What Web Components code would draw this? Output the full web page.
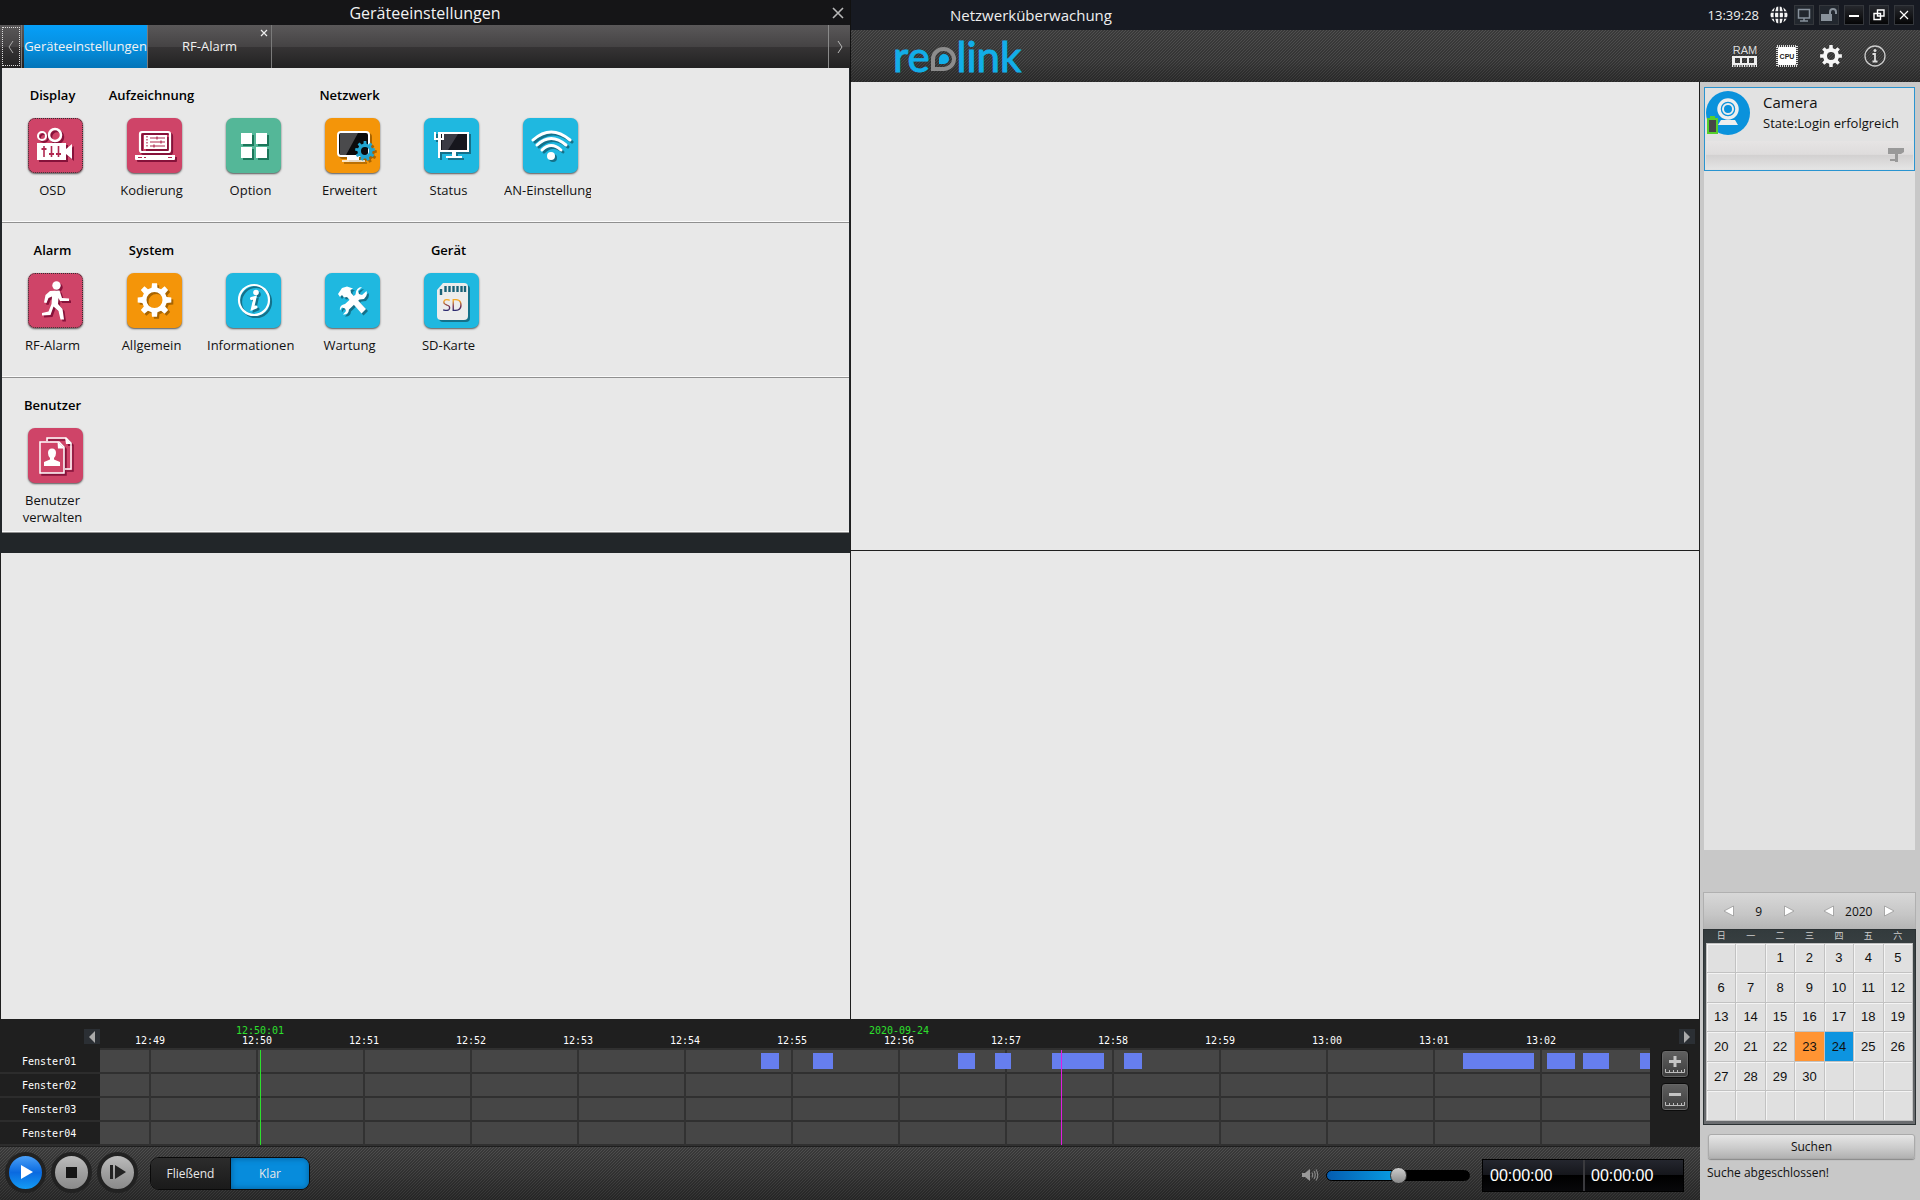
<!DOCTYPE html>
<html lang="de">
<head>
<meta charset="utf-8">
<title>Netzwerküberwachung</title>
<style>
  html, body {
    height: 100%;
    margin: 0;
  }
  body {
    background: #1f1f1f;
    font-family: "Open Sans", "Noto Sans", sans-serif;
    font-size: 13px;
  }
</style>
</head>
<body>
<client-app></client-app>

<script>
const HATCH = 'linear-gradient(135deg, rgba(0,0,0,.28) 25%, rgba(0,0,0,0) 25% 50%, rgba(0,0,0,.28) 50% 75%, rgba(0,0,0,0) 75%) 0 0 / 3px 3px';

const RESET = `
  *, *::before, *::after { box-sizing: border-box; }
  button {
    margin: 0;
    padding: 0;
    border: 0;
    background: none;
    color: inherit;
    font: inherit;
    cursor: pointer;
  }
  svg { display: block; overflow: visible; }
`;

// outline of a cog with the given number of teeth
function cogPath(cx, cy, outer, inner, teeth) {
  const points = [];
  const step = (Math.PI * 2) / teeth;
  for (let i = 0; i < teeth; i++) {
    const a = i * step - Math.PI / 2;
    [[-0.3, inner], [-0.19, outer], [0.19, outer], [0.3, inner]].forEach(([o, r]) => {
      points.push(`${(cx + r * Math.cos(a + o * step)).toFixed(2)} ${(cy + r * Math.sin(a + o * step)).toFixed(2)}`);
    });
  }
  return `M${points.join('L')}Z`;
}

const ICONS = {
  osd: `
    <circle cx="14" cy="18" r="4" fill="none" stroke="#fff" stroke-width="2"/>
    <circle cx="27" cy="17" r="6" fill="none" stroke="#fff" stroke-width="2.5"/>
    <path fill="#fff" fill-rule="evenodd" d="M9 25H38V31L44 26V41L38 36V42H9Z"/>
    <path stroke="#b02850" stroke-width="1.6" d="M16 28V39M23.500 28V39M30.500 28V39"/>
    <path stroke="#b02850" stroke-width="2" d="M13.500 31H18.500M21 36H26M28 36H33"/>`,
  encode: `
    <rect x="13" y="14" width="30" height="20" rx="2" fill="none" stroke="#fff" stroke-width="2.2"/>
    <rect x="17" y="17" width="23" height="14" fill="#fff"/>
    <path stroke="#b02850" stroke-width="1.2" d="M23 20H38M23 24H38M23 28H38M30 18.500V21.500M34 22.500V25.500M27 26.500V29.500"/>
    <path stroke="#b02850" stroke-width="1.2" stroke-dasharray="1.5 1.5" d="M20 18V30"/>
    <path fill="#fff" d="M8 37H48V41Q48 42 47 42H9Q8 42 8 41Z"/>
    <path stroke="#b02850" stroke-width="1.2" d="M11 39.500H15M17 39.500H19M41 39.500H45"/>`,
  option: `<path fill="#fff" d="M15 15H26V26H15ZM30 15H41V26H30ZM15 29H26V40H15ZM30 29H41V40H30Z"/>`,
  advanced: `
    <path fill="#fff" d="M22 38H34V42H22Z"/>
    <rect x="13" y="14" width="31" height="24" rx="3" fill="#0b0b0c" stroke="#fff" stroke-width="2"/>
    <path fill="#4a4a4c" d="M15 15H33L21 37H15Z"/>
    <path stroke="#fff" stroke-width="1.5" d="M17 43H40"/>
    <path fill="#22a5d0" fill-rule="evenodd" d="${cogPath(40, 33, 10, 7.5, 9)}M44 33A4 4 0 1 0 36 33A4 4 0 1 0 44 33Z"/>`,
  status: `
    <rect x="16" y="15" width="28" height="18" fill="#16161d" stroke="#fff" stroke-width="2"/>
    <path fill="#3b3b44" d="M18 16H34L24 32H18Z"/>
    <path fill="#fff" d="M28 34H32V38H38V40H22V38H28Z"/>
    <path fill="none" stroke="#fff" stroke-width="2" d="M11 14V21H19V14M15 14V40"/>`,
  wifi: `
    <g fill="none" stroke="#fff" stroke-width="3" stroke-linecap="round">
      <path d="M10 22Q28 6 47 22"/><path d="M14 27Q28 14 43 27"/><path d="M19 32Q28 23 38 32"/>
    </g>
    <circle cx="28" cy="38" r="4" fill="#fff"/>`,
  runner: `
    <circle cx="28.500" cy="12.500" r="4.200" fill="#fff"/>
    <path fill="#fff" d="M22 18L31.500 17.500L34 25L41 25.500V28L32 28L30.500 25L30 31L34.500 36L36 46.500H32.500L30.500 38L25.500 33.500L22.500 42L14 42.500V40L20.500 38.500L23.500 31L24 23.500L20.500 25L18.500 30L16 29.500L17.500 22Z"/>`,
  gear: `<path fill="#fff" fill-rule="evenodd" d="${cogPath(27.5, 27, 17, 12.5, 8)}M35.500 27A8 8 0 1 0 19.500 27A8 8 0 1 0 35.500 27Z"/>`,
  info: `
    <circle cx="28" cy="27" r="15" fill="none" stroke="#fff" stroke-width="2.2"/>
    <circle cx="30" cy="19.500" r="2.800" fill="#fff"/>
    <path fill="none" stroke="#fff" stroke-width="3" stroke-linecap="round" d="M25.500 25.500L29 24.500L26.500 35.500L30 34"/>`,
  service: `
    <path fill="#fff" d="M13 21L17 15L22 13.500L28 15.500L25.500 17L26 20L41 36L36.500 40.500L22 24L19 24.500L17 22L15 24Z"/>
    <path fill="#fff" d="M37 14L33 18L34 21L37 22L41.500 18Q43 23 39 26L34.500 26.500L24 36.500Q23.500 42 18 41.500L21 38L20 35.500L17 34.500L15 37.500Q14 32 20 31L30.500 21.500Q31 14 37 14Z"/>`,
  sd: `
    <path fill="#ececec" d="M19 10H40Q44 10 44 14V43Q44 47 40 47H17Q13 47 13 43V17Z"/>
    <path stroke="#1b6278" stroke-width="2.4" d="M17 16V22M21.500 13V19M25.500 13V19M29.500 13V19M33.500 13V19M37.500 13V19M41 13V19"/>
    <text x="28.500" y="38" text-anchor="middle" font-family="Open Sans, sans-serif" font-size="16" fill="url(#sdInk)">SD</text>
    <defs><linearGradient id="sdInk" x1="0" y1="0" x2="0" y2="1">
      <stop offset=".3" stop-color="#f5a623"/><stop offset=".55" stop-color="#7a3050"/><stop offset=".8" stop-color="#1a2a78"/>
    </linearGradient></defs>`,
  users: `
    <path fill="none" stroke="#fff" stroke-width="1.500" d="M19 13V10H38L43 15V41H37"/>
    <path fill="#fff" d="M37 9.500L43.500 16H38Z"/>
    <path fill="#cf4468" stroke="#fff" stroke-width="1.500" d="M12 14H31L36 19V45H12Z"/>
    <path fill="#fff" d="M29.500 13.500L36.500 20.500H30Z"/>
    <path fill="#fff" d="M24 20.500Q28 20.500 28 25Q28 28 26 30V31.500L32 34V38H16V34L22 31.500V30Q20 28 20 25Q20 20.500 24 20.500Z"/>`
};

class ClientApp extends HTMLElement {
  constructor() {
    super();
    this.attachShadow({ mode: 'open' }).innerHTML = this.template;
  }

  get template() {
    return `
      <style>
        ${RESET}
        :host {
          display: grid;
          grid-template-columns: minmax(0, 1fr) minmax(0, 1fr) 220px;
          grid-template-rows: auto minmax(0, 1fr) auto auto;
          min-height: 100vh;
        }
        .left {
          grid-column: 1;
          grid-row: 1 / 3;
          display: flex;
          flex-direction: column;
        }
        .left video-view { flex: 1; }
        app-header { grid-column: 2 / 4; grid-row: 1; }
        .right {
          grid-column: 2;
          grid-row: 2;
          display: grid;
          grid-template-rows: 1fr 1fr;
          border-right: 1px solid #1f1f1f;
        }
        side-panel { grid-column: 3; grid-row: 2 / 5; }
        time-line { grid-column: 1 / 3; grid-row: 3; }
        player-bar { grid-column: 1 / 3; grid-row: 4; }
      </style>
      <div class="left">
        <settings-window>
          <settings-row>
            <settings-item heading="Display" icon="osd" tone="pink" focused>OSD</settings-item>
            <settings-item heading="Aufzeichnung" icon="encode" tone="pink">Kodierung</settings-item>
            <settings-item icon="option" tone="green">Option</settings-item>
            <settings-item heading="Netzwerk" icon="advanced" tone="orange">Erweitert</settings-item>
            <settings-item icon="status" tone="cyan">Status</settings-item>
            <settings-item icon="wifi" tone="cyan">AN-Einstellung</settings-item>
          </settings-row>
          <settings-row>
            <settings-item heading="Alarm" icon="runner" tone="pink" focused>RF-Alarm</settings-item>
            <settings-item heading="System" icon="gear" tone="orange">Allgemein</settings-item>
            <settings-item icon="info" tone="cyan">Informationen</settings-item>
            <settings-item icon="service" tone="cyan">Wartung</settings-item>
            <settings-item heading="Gerät" icon="sd" tone="cyan">SD-Karte</settings-item>
          </settings-row>
          <settings-row>
            <settings-item heading="Benutzer" icon="users" tone="pink">Benutzer<br>verwalten</settings-item>
          </settings-row>
        </settings-window>
        <video-view></video-view>
      </div>
      <app-header></app-header>
      <div class="right">
        <video-view></video-view>
        <video-view></video-view>
      </div>
      <side-panel>
        <camera-card name="Camera">State:Login erfolgreich</camera-card>
      </side-panel>
      <time-line></time-line>
      <player-bar></player-bar>
    `;
  }
}

class VideoView extends HTMLElement {
  constructor() {
    super();
    this.attachShadow({ mode: 'open' }).innerHTML = `
      <style>
        :host {
          display: block;
          box-sizing: border-box;
          border-left: 1px solid #1f1f1f;
          border-bottom: 1px solid #1f1f1f;
          background: #e8e8e8;
        }
      </style>
    `;
  }
}

class SettingsWindow extends HTMLElement {
  constructor() {
    super();
    this.attachShadow({ mode: 'open' }).innerHTML = this.template;
  }

  get template() {
    return `
      <style>
        ${RESET}
        :host {
          display: block;
          background: #222629;
          padding-bottom: 20px;
        }
        header {
          display: grid;
          grid-template-columns: 24px 1fr 24px;
          align-items: center;
          height: 25px;
          background: #151517;
          color: #f2f2f2;
        }
        header button { justify-self: center; }
        h1 {
          grid-column: 2;
          margin: 0;
          font-size: 16px;
          font-weight: 400;
          line-height: 24px;
          text-align: center;
        }
        nav {
          display: flex;
          height: 43px;
          color: #f2f2f2;
          background: linear-gradient(#5a5859, #454344 50%, #363435 51%, #222);
        }
        .arrow {
          display: grid;
          place-items: center;
          width: 22px;
          border-right: 1px solid #7a7a7a;
        }
        .arrow.prev { outline: 1px dotted #ddd; outline-offset: -3px; }
        .arrow.next {
          margin-left: auto;
          border-right: 0;
          border-left: 1px solid #8a8a8a;
        }
        .tab {
          position: relative;
          width: 124px;
          border-right: 1px solid #7a7a7a;
          line-height: 43px;
          white-space: nowrap;
        }
        .tab button { width: 100%; height: 100%; }
        .tab.active {
          margin-left: 2px;
          background: linear-gradient(#069ff8, #0790e0 50%, #0274b8);
        }
        .tab .close {
          position: absolute;
          top: 4px;
          right: 3px;
          width: 8px;
          height: 8px;
        }
        main {
          margin: 0 1px 0 2px;
          background: #e8e8e8;
        }
      </style>
      <header>
        <h1>Geräteeinstellungen</h1>
        <button aria-label="Schließen"><svg width="12" height="12" viewBox="0 0 12 12"><path d="M1 1L11 11M11 1L1 11" stroke="#b8b8b8" stroke-width="1.6"/></svg></button>
      </header>
      <nav>
        <button class="arrow prev" aria-label="Zurück"><svg width="6" height="14" viewBox="0 0 6 14"><path d="M5 1L1 7L5 13" fill="none" stroke="#aaa"/></svg></button>
        <div class="tab active"><button>Geräteeinstellungen</button></div>
        <div class="tab">
          <button>RF-Alarm</button>
          <button class="close" aria-label="Tab schließen"><svg width="8" height="8" viewBox="0 0 8 8"><path d="M1 1L7 7M7 1L1 7" stroke="#eee" stroke-width="1.2"/></svg></button>
        </div>
        <button class="arrow next" aria-label="Weiter"><svg width="6" height="14" viewBox="0 0 6 14"><path d="M1 1L5 7L1 13" fill="none" stroke="#bbb"/></svg></button>
      </nav>
      <main><slot></slot></main>
    `;
  }
}

class SettingsRow extends HTMLElement {
  constructor() {
    super();
    this.attachShadow({ mode: 'open' }).innerHTML = `
      <style>
        :host {
          display: flex;
          box-sizing: border-box;
          min-height: 155px;
          padding: 18px 7px 0;
          border-bottom: 1px solid #8f8f8f;
          box-shadow: inset 0 -1px #fafafa;
        }
      </style>
      <slot></slot>
    `;
  }
}

class SettingsItem extends HTMLElement {
  constructor() {
    super();
    this.attachShadow({ mode: 'open' });
  }

  get tones() {
    return {
      pink: ['#cf4468', '#86123a'],
      green: ['#54b798', '#1c765a'],
      orange: ['#f49509', '#a86400'],
      cyan: ['#1fb8e0', '#14718a']
    };
  }

  connectedCallback() {
    this.shadowRoot.innerHTML = this.template;
  }

  get template() {
    const [tile, shade] = this.tones[this.getAttribute('tone')];
    return `
      <style>
        ${RESET}
        :host {
          display: block;
          flex: 0 0 87px;
          min-width: 0;
          margin-right: 12px;
          color: #111;
        }
        h2 {
          display: flex;
          justify-content: center;
          height: 18px;
          margin: 0 0 14px;
          color: #000;
          font-size: 13px;
          font-weight: 600;
          line-height: 18px;
          white-space: nowrap;
        }
        button { display: block; width: 100%; }
        .tile {
          width: 55px;
          height: 55px;
          margin: 0 0 9px 19px;
          border-radius: 7px;
          background: ${tile};
          box-shadow: 0 1px 2px #555;
        }
        :host([focused]) .tile { outline: 1px dotted #333; outline-offset: -1px; }
        .tile svg { filter: drop-shadow(2px 2px 0 ${shade}); }
        .label {
          display: block;
          overflow: hidden;
          line-height: 17px;
          white-space: nowrap;
        }
      </style>
      <h2>${this.getAttribute('heading') || ''}</h2>
      <button>
        <div class="tile"><svg width="55" height="55" viewBox="0 0 55 55">${ICONS[this.getAttribute('icon')]}</svg></div>
        <span class="label"><slot></slot></span>
      </button>
    `;
  }
}

class AppHeader extends HTMLElement {
  constructor() {
    super();
    this.attachShadow({ mode: 'open' }).innerHTML = this.template;
  }

  get template() {
    return `
      <style>
        ${RESET}
        :host {
          display: block;
          border-left: 1px solid #111;
          color: #eee;
        }
        .title {
          display: flex;
          align-items: center;
          gap: 5px;
          height: 30px;
          padding: 0 6px 0 99px;
          background: #171a22;
        }
        h1 {
          flex: 1;
          margin: 0;
          font-size: 15px;
          font-weight: 400;
        }
        time { margin-right: 5px; line-height: 30px; }
        .box {
          display: grid;
          place-items: center;
          width: 20px;
          height: 20px;
          border: 1px solid #34373c;
          background: linear-gradient(#26282d, #050506);
        }
        .box.dim { background: #22272e; }
        .title .globe { display: grid; place-items: center; width: 20px; height: 20px; }
        .tools {
          display: flex;
          align-items: center;
          gap: 20px;
          height: 52px;
          padding: 0 32px 0 42px;
          background: ${HATCH}, linear-gradient(#505050, #484848 60%, #383838);
        }
        .logo {
          display: flex;
          align-items: flex-end;
          gap: 1px;
          margin-right: auto;
          color: #12aee8;
          font: 42px/40px Lato, sans-serif;
          -webkit-text-stroke: 1px #12aee8;
        }
        .logo svg { margin-bottom: 5px; }
        .tools button { width: 24px; }
      </style>
      <div class="title">
        <h1>Netzwerküberwachung</h1>
        <time>13:39:28</time>
        <button class="globe" aria-label="Sprache"><svg width="18" height="18" viewBox="0 0 18 18"><circle cx="9" cy="9" r="8.500" fill="#f4f4f4"/><path fill="none" stroke="#171a22" stroke-width="1.500" d="M0 6H18M0 12H18M9 0V18M6 0Q2.500 9 6 18M12 0Q15.500 9 12 18"/></svg></button>
        <button class="box dim" aria-label="Monitor"><svg width="14" height="14" viewBox="0 0 14 14"><path fill="none" stroke="#87919c" stroke-width="1.500" d="M1.500 1.500H12.500V10H1.500ZM3 13H11M7 10V13"/></svg></button>
        <button class="box dim" aria-label="Sperren"><svg width="16" height="14" viewBox="0 0 16 14"><path fill="#89929b" d="M0 6H11V13H0Z"/><path fill="none" stroke="#89929b" stroke-width="2" d="M9 6V4Q9 1 12 1Q15 1 15 4V6"/></svg></button>
        <button class="box" aria-label="Minimieren"><svg width="12" height="12" viewBox="0 0 12 12"><path stroke="#fff" stroke-width="2" d="M1 7H11"/></svg></button>
        <button class="box" aria-label="Wiederherstellen"><svg width="12" height="12" viewBox="0 0 12 12"><path fill="none" stroke="#fff" stroke-width="1.400" d="M4.500 1H11V7H4.500ZM1 4.500H7.500V10.500H1Z"/></svg></button>
        <button class="box" aria-label="Schließen"><svg width="10" height="10" viewBox="0 0 10 10"><path stroke="#fff" stroke-width="1.200" d="M1 1L9 9M9 1L1 9"/></svg></button>
      </div>
      <div class="tools">
        <div class="logo">
          <span>re</span>
          <svg width="25" height="24" viewBox="0 0 25 24"><path fill="none" stroke="#8c8c8c" stroke-width="4" d="M2 22V12A10.500 10 0 1 1 12.500 22Z"/><path fill="#12aee8" d="M8 17V12A5 5 0 1 1 13 17Z"/></svg>
          <span>link</span>
        </div>
        <button aria-label="Arbeitsspeicher"><svg width="26" height="24" viewBox="0 0 26 24"><text x="13" y="10" text-anchor="middle" font-family="Liberation Sans, sans-serif" font-size="11" fill="#ddd">RAM</text><path fill="#eee" fill-rule="evenodd" d="M0 12H25V21H0ZM3 14V19H8V14ZM10 14V19H15V14ZM17 14V19H22V14Z"/><path stroke="#eee" stroke-width="2" stroke-dasharray="1.200 1.200" d="M0 22H25"/></svg></button>
        <button aria-label="Prozessor"><svg width="22" height="22" viewBox="0 0 22 22"><rect x="1" y="1" width="20" height="20" fill="none" stroke="#ddd" stroke-width="2" stroke-dasharray="1 1"/><rect x="2" y="2" width="18" height="18" rx="1" fill="#fff"/><text x="11" y="14" text-anchor="middle" font-family="Liberation Sans, sans-serif" font-size="7" font-weight="700" fill="#222">CPU</text></svg></button>
        <button aria-label="Einstellungen"><svg width="22" height="22" viewBox="0 0 22 22"><path fill="#f6f6f6" fill-rule="evenodd" d="${cogPath(11, 11, 11, 8, 8)}M15 11A4 4 0 1 0 7 11A4 4 0 1 0 15 11Z"/></svg></button>
        <button aria-label="Info"><svg width="22" height="22" viewBox="0 0 22 22"><circle cx="11" cy="11" r="10" fill="none" stroke="#ccc" stroke-width="1.300"/><circle cx="11" cy="5.500" r="1.500" fill="#ddd"/><path fill="none" stroke="#ddd" stroke-width="1.800" d="M8.500 9H11V16.500M8.500 16.500H13.500"/></svg></button>
      </div>
    `;
  }
}

class SidePanel extends HTMLElement {
  constructor() {
    super();
    this.attachShadow({ mode: 'open' }).innerHTML = this.template;
  }

  get template() {
    return `
      <style>
        ${RESET}
        :host {
          display: flex;
          flex-direction: column;
          padding: 5px 4px 18px 3px;
          background: #c8c8c8;
          color: #111;
          font-size: 12px;
        }
        .list {
          flex: 1;
          margin: 0 1px 42px;
          background: #e2e2e2;
        }
        .search {
          height: 25px;
          margin: 9px 1px 5px 5px;
          border: 1px solid #aaa;
          border-radius: 3px;
          background: linear-gradient(#e6e6e6, #c9c9c9 60%, #b2b2b2);
          box-shadow: 0 1px 1px #888;
        }
        p { margin: 0 4px; line-height: 18px; }
      </style>
      <div class="list"><slot></slot></div>
      <month-calendar></month-calendar>
      <button class="search">Suchen</button>
      <p>Suche abgeschlossen!</p>
    `;
  }
}

class CameraCard extends HTMLElement {
  constructor() {
    super();
    this.attachShadow({ mode: 'open' });
  }

  connectedCallback() {
    this.shadowRoot.innerHTML = this.template;
  }

  get template() {
    return `
      <style>
        ${RESET}
        :host {
          display: block;
          padding: 3px 1px 1px;
          border: 1px solid #2a94d0;
          background: #e2e2e2;
          font-size: 13px;
        }
        .info { display: flex; gap: 13px; height: 50px; }
        h2 { margin: 1px 0 0; font-size: 15px; font-weight: 400; line-height: 20px; }
        p { margin: 0; line-height: 22px; white-space: nowrap; }
        .strip {
          display: flex;
          justify-content: flex-end;
          align-items: center;
          height: 28px;
          padding-right: 8px;
          background: linear-gradient(#e6e4e4, #dedcdc 48%, #d2d0d0 50%, #e4e4e4);
        }
      </style>
      <div class="info">
        <svg width="44" height="45" viewBox="0 0 44 45">
          <circle cx="22" cy="22" r="22" fill="#0a92dc"/>
          <circle cx="22" cy="18" r="9" fill="none" stroke="#eee" stroke-width="3.500"/>
          <circle cx="22" cy="18" r="5" fill="none" stroke="#eee" stroke-width="2"/>
          <path fill="#eee" d="M15 29H29L32 34H12Z"/>
          <path fill="#55cf2c" d="M1 27H4V25H9V27H12V43H1Z"/>
          <path fill="#474747" d="M3 29H10V41H3Z"/>
        </svg>
        <div>
          <h2>${this.getAttribute('name')}</h2>
          <p><slot></slot></p>
        </div>
      </div>
      <div class="strip"><svg width="17" height="16" viewBox="0 0 17 16"><path fill="#999" d="M0 1H16V5L13 7H0ZM7 7H10V15H7Z"/><path stroke="#999" stroke-width="2" d="M2 13H8"/></svg></div>
    `;
  }
}

class MonthCalendar extends HTMLElement {
  constructor() {
    super();
    this.attachShadow({ mode: 'open' }).innerHTML = this.template;
  }

  // September 2020 starts on a Tuesday; the grid always shows six weeks
  get weeks() {
    let rows = '';
    for (let week = 0; week < 6; week++) {
      rows += '<tr>';
      for (let i = 0; i < 7; i++) {
        const day = week * 7 + i - 1;
        const mark = day === 23 ? ' class="marked"' : day === 24 ? ' class="current"' : '';
        rows += `<td${mark}>${day > 0 && day <= 30 ? day : ''}</td>`;
      }
      rows += '</tr>';
    }
    return rows;
  }

  get template() {
    const arrow = (d) => `<svg width="10" height="10" viewBox="0 0 10 10"><path d="${d}" fill="#fff" stroke="#999" stroke-width=".8"/></svg>`;
    const left = arrow('M9.500 0V10L0 5Z');
    const right = arrow('M.5 0V10L10 5Z');
    return `
      <style>
        ${RESET}
        :host { display: block; }
        .nav {
          display: grid;
          grid-template-columns: 1fr 1fr;
          height: 37px;
          padding: 0 20px;
          border: 1px solid #b0b0b0;
          border-bottom: 0;
          background: linear-gradient(#d8d8d8, #c6c6c6 60%, #b4b4b4);
        }
        .nav div {
          display: flex;
          align-items: center;
          justify-content: space-between;
          padding-right: 16px;
        }
        .nav div + div { padding: 0 1px 0 14px; }
        .frame {
          padding: 0 2px 3px;
          border: 1px solid #2c3234;
          background: linear-gradient(#333b3d, #6b6d70);
        }
        table {
          width: 100%;
          height: 191px;
          border-collapse: collapse;
          table-layout: fixed;
          font-family: "Liberation Sans", sans-serif;
          font-size: 13px;
          text-align: center;
        }
        th {
          height: 13px;
          padding: 0;
          color: #ccc;
          font: 9px/10px "Noto Sans CJK SC", sans-serif;
        }
        td {
          height: 29px;
          padding: 0;
          border: 1px solid #c2c2c2;
          background: #e0e0e0;
          box-shadow: inset 1px 1px #f4f4f4;
        }
        .marked { background: #ff9433; box-shadow: none; }
        .current { background: #0d94e0; box-shadow: none; }
      </style>
      <div class="nav">
        <div><button aria-label="Vorheriger Monat">${left}</button><span>9</span><button aria-label="Nächster Monat">${right}</button></div>
        <div><button aria-label="Vorheriges Jahr">${left}</button><span>2020</span><button aria-label="Nächstes Jahr">${right}</button></div>
      </div>
      <div class="frame">
        <table>
          <thead><tr>${[...'日一二三四五六'].map((d) => `<th>${d}</th>`).join('')}</tr></thead>
          <tbody>${this.weeks}</tbody>
        </table>
      </div>
    `;
  }
}

class TimeLine extends HTMLElement {
  constructor() {
    super();
    this.attachShadow({ mode: 'open' }).innerHTML = this.template;
  }

  // places are given on a scale of 1550 units, the width of the visible window of time
  at(value) {
    return `${(value / 15.5).toFixed(3)}%`;
  }

  get hours() {
    return ['12:49', '12:50', '12:51', '12:52', '12:53', '12:54', '12:55', '12:56', '12:57', '12:58', '12:59', '13:00', '13:01', '13:02'];
  }

  get recordings() {
    return [[661, 679], [713, 733], [858, 875], [895, 911], [952, 1004], [1024, 1042], [1363, 1434], [1447, 1475], [1483, 1509], [1540, 1550]];
  }

  get template() {
    const ticks = this.hours.map((_, i) => `<i class="tick" style="left:${this.at(49 + i * 107)}"></i>`).join('');
    const labels = this.hours.map((h, i) => `<span style="left:${this.at(50 + i * 107)}">${h}</span>`).join('');
    const blocks = this.recordings.map(([a, b]) => `<i class="block" style="left:${this.at(a)};width:${this.at(b - a)}"></i>`).join('');
    const ruler = '<path stroke="#bbb" fill="none" d="M4.500 19V22.500H23.500V19M8.500 20V22M12.500 20V22M16.500 20V22M20.500 20V22"/>';
    return `
      <style>
        ${RESET}
        :host {
          display: grid;
          grid-template-columns: 100px minmax(0, 1fr) 50px;
          grid-template-rows: 30px auto;
          padding-bottom: 1px;
          background: #1f1f1f;
          color: #fff;
          font: 10px/12px "DejaVu Sans Mono", monospace;
        }
        .step {
          display: grid;
          place-items: center;
          width: 16px;
          height: 15px;
          margin-top: 9px;
          background: #2b2f34;
        }
        .step.prev { margin-left: 84px; }
        .step.next { margin-left: 29px; }
        .axis, .track { position: relative; }
        .axis { border-bottom: 2px solid #303030; }
        .axis span {
          position: absolute;
          top: 15px;
          transform: translateX(-50%);
        }
        .axis .now { top: 5px; color: #2de02d; }
        .names div {
          height: 24px;
          padding-left: 22px;
          border-bottom: 2px solid #2c2c2c;
          line-height: 24px;
        }
        .track { overflow: hidden; }
        .lane {
          position: relative;
          height: 24px;
          border-bottom: 2px solid #303030;
          background: #464646;
        }
        .tick {
          position: absolute;
          top: 0;
          bottom: 0;
          width: 2px;
          background: #323232;
        }
        .block {
          position: absolute;
          z-index: 1;
          top: 3px;
          height: 16px;
          background: #667eee;
        }
        .head {
          position: absolute;
          z-index: 2;
          top: 0;
          bottom: 1px;
          width: 1px;
          background: #2de02d;
        }
        .head.cut { background: #e01ce0; }
        .zoom {
          display: flex;
          flex-direction: column;
          gap: 5px;
          padding-left: 11px;
        }
        .zoom button {
          width: 28px;
          height: 28px;
          border: 1px solid #0c0c0c;
          border-radius: 4px;
          background: linear-gradient(#606060, #3c3c3c);
          box-shadow: inset 0 0 0 1px #666;
        }
        .zoom svg { margin: -1px; }
      </style>
      <button class="step prev" aria-label="Früher"><svg width="8" height="12" viewBox="0 0 8 12"><path fill="#aaa" d="M7 0V12L1 6Z"/></svg></button>
      <div class="axis">
        ${labels}
        <span class="now" style="left:${this.at(160)}">12:50:01</span>
        <span class="now" style="left:${this.at(799)}">2020-09-24</span>
      </div>
      <button class="step next" aria-label="Später"><svg width="8" height="12" viewBox="0 0 8 12"><path fill="#aaa" d="M1 0V12L7 6Z"/></svg></button>
      <div class="names"><div>Fenster01</div><div>Fenster02</div><div>Fenster03</div><div>Fenster04</div></div>
      <div class="track">
        <div class="lane">${blocks}</div>
        <div class="lane"></div>
        <div class="lane"></div>
        <div class="lane"></div>
        ${ticks}
        <i class="head" style="left:${this.at(160)}"></i>
        <i class="head cut" style="left:${this.at(961)}"></i>
      </div>
      <div class="zoom">
        <button aria-label="Vergrößern"><svg width="28" height="28" viewBox="0 0 28 28"><path fill="#c4c4c4" d="M12.500 6H15.500V10H20V13H15.500V17H12.500V13H8V10H12.500Z"/>${ruler}</svg></button>
        <button aria-label="Verkleinern"><svg width="28" height="28" viewBox="0 0 28 28"><path fill="#c4c4c4" d="M8 10H20V13H8Z"/>${ruler}</svg></button>
      </div>
    `;
  }
}

class PlayerBar extends HTMLElement {
  constructor() {
    super();
    this.attachShadow({ mode: 'open' }).innerHTML = this.template;
  }

  get template() {
    return `
      <style>
        ${RESET}
        :host {
          display: flex;
          align-items: center;
          height: 53px;
          padding: 0 16px 0 5px;
          background: ${HATCH}, linear-gradient(#505050, #464646 40%, #343434);
          color: #fff;
        }
        .round {
          display: grid;
          place-items: center;
          width: 41px;
          height: 41px;
          margin: 0 5px 3px 0;
          border: 4px solid #222;
          border-radius: 50%;
          background: linear-gradient(#bcbcbc, #a0a0a0 50%, #8a8a8a);
        }
        .round.play { background: linear-gradient(#4aa0f8, #0a6ae0 50%, #149cf4); }
        .quality {
          display: flex;
          margin: 0 auto 0 7px;
          border: 1px solid #0a0a0a;
          border-radius: 9px;
          overflow: hidden;
          color: #e8e8e8;
          font-size: 12px;
        }
        .quality button {
          width: 79px;
          height: 31px;
          background: linear-gradient(#2c2c2c, #1a1a1a);
        }
        .quality button + button { border-left: 1px solid #0a0a0a; }
        .quality .on {
          background: #078cdc;
          box-shadow: inset 0 0 6px #045a94;
        }
        label { margin: 2px 7px 0 0; }
        input {
          appearance: none;
          width: 144px;
          height: 17px;
          margin: 4px 12px 0 0;
          background: none;
        }
        input::-webkit-slider-runnable-track {
          height: 11px;
          border: 1px solid #000;
          border-radius: 6px;
          background: linear-gradient(90deg, #045cb0, #08a0e4 50%, #000 50%);
        }
        input::-webkit-slider-thumb {
          appearance: none;
          width: 17px;
          height: 17px;
          margin-top: -4px;
          border: 1px solid #333;
          border-radius: 50%;
          background: linear-gradient(#ccc, #8a8a8a);
        }
        .clock {
          display: flex;
          margin-top: 3px;
          border: 1px solid #000;
          font: 16px/31px "Liberation Sans", sans-serif;
        }
        output {
          width: 100px;
          padding-left: 7px;
          background: linear-gradient(#24262e, #15161b 49%, #000 50%, #08080a);
        }
        output + output { border-left: 2px solid #3a3a3e; padding-left: 6px; }
      </style>
      <button class="round play" aria-label="Wiedergabe"><svg width="14" height="14" viewBox="0 0 14 14"><path fill="#fff" d="M2 0L14 7L2 14Z"/></svg></button>
      <button class="round" aria-label="Stopp"><svg width="11" height="11" viewBox="0 0 11 11"><path fill="#151515" d="M0 0H11V11H0Z"/></svg></button>
      <button class="round" aria-label="Einzelbild"><svg width="16" height="14" viewBox="0 0 16 14"><path fill="#222" d="M0 0H3V14H0ZM5 0L16 7L5 14Z"/></svg></button>
      <div class="quality"><button>Fließend</button><button class="on">Klar</button></div>
      <label for="volume" aria-label="Lautstärke"><svg width="17" height="14" viewBox="0 0 17 14"><path fill="#999" d="M0 5H3L8 1V13L3 9H0Z"/><path fill="none" stroke="#888" stroke-width="1.200" d="M10 4.500Q11.500 7 10 9.500M12 3Q14.500 7 12 11M14 1.500Q17.500 7 14 12.500"/></svg></label>
      <input id="volume" type="range" min="0" max="100" value="50">
      <div class="clock"><output>00:00:00</output><output>00:00:00</output></div>
    `;
  }
}

customElements.define('video-view', VideoView);
customElements.define('settings-window', SettingsWindow);
customElements.define('settings-row', SettingsRow);
customElements.define('settings-item', SettingsItem);
customElements.define('app-header', AppHeader);
customElements.define('side-panel', SidePanel);
customElements.define('camera-card', CameraCard);
customElements.define('month-calendar', MonthCalendar);
customElements.define('time-line', TimeLine);
customElements.define('player-bar', PlayerBar);
customElements.define('client-app', ClientApp);
</script>
</body>
</html>
